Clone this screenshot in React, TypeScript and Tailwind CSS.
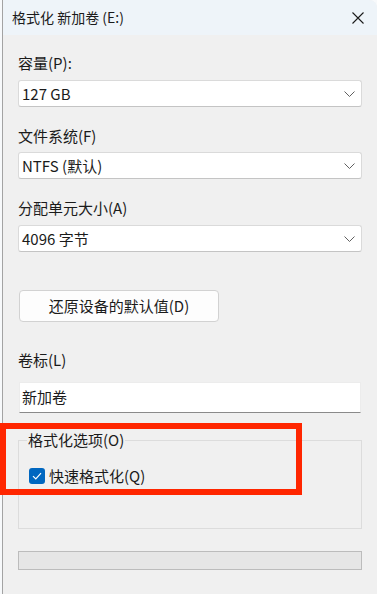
import React from "react";

const font = { fontFamily: '"Noto Sans CJK SC", "Noto Sans", sans-serif' };

function Chevron() {
  return (
    <svg width="11" height="6" viewBox="0 0 11 6" className="text-[#606060]">
      <polyline points="0.5,0.5 5.5,5.5 10.5,0.5" fill="none" stroke="currentColor" strokeWidth="1" />
    </svg>
  );
}

function Combo({ value }: { value: string }) {
  return (
    <div className="flex items-center justify-between h-[27px] w-[344px] bg-white border border-[#dadada] border-b-[#c4c4c4] rounded-[3px] pl-[3px] pr-[6px]">
      <span className="text-[15px] leading-none text-[#1b1b1b]">{value}</span>
      <Chevron />
    </div>
  );
}

function Label({ children, className = "" }: { children: React.ReactNode; className?: string }) {
  return <div className={"text-[15px] leading-[20px] text-[#1b1b1b] " + className}>{children}</div>;
}

export default function App() {
  return (
    <div className="w-[377px] h-[594px] bg-[#f7f9fb] pl-[2px] relative overflow-hidden" style={font}>
      <div className="h-full bg-[#f0f0f0] border-l border-[#a3a3a3] rounded-tr-[8px] overflow-hidden flex flex-col">
        <div className="h-[35px] bg-[#eef4f9] flex items-center justify-between pl-[9px] pr-[13px] shrink-0">
          <span className="text-[14px] text-[#1b1b1b]">格式化 新加卷 (E:)</span>
          <svg width="12" height="12" viewBox="0 0 12 12">
            <path d="M0.5 0.5 L11.5 11.5 M11.5 0.5 L0.5 11.5" stroke="#1b1b1b" strokeWidth="1.1" />
          </svg>
        </div>

        <div className="px-[15px] flex flex-col">
          <Label className="mt-[18px]">容量(P):</Label>
          <div className="mt-[7px]"><Combo value="127 GB" /></div>

          <Label className="mt-[19px]">文件系统(F)</Label>
          <div className="mt-[6px]"><Combo value="NTFS (默认)" /></div>

          <Label className="mt-[19px]">分配单元大小(A)</Label>
          <div className="mt-[7px]"><Combo value="4096 字节" /></div>

          <button className="mt-[38px] ml-[1px] w-[200px] h-[32px] bg-[#fdfdfd] border border-[#d2d2d2] rounded-[4px] text-[15px] text-[#1b1b1b] flex items-center justify-center">
            还原设备的默认值(D)
          </button>

          <Label className="mt-[28px]">卷标(L)</Label>
          <div className="mt-[12px] ml-[1px] h-[31px] w-[342px] bg-white border border-[#ececec] border-b-[#8a8a8a] flex items-center pl-[2px] text-[15px] text-[#1b1b1b]">
            新加卷
          </div>

          <fieldset className="mt-[17px] h-[99px] w-[344px] border border-[#dcdcdc]">
            <legend className="ml-[8px] px-[1px] text-[15px] leading-[20px] text-[#1b1b1b]">格式化选项(O)</legend>
            <div className="mt-[16px] ml-[10px] flex items-center gap-[4px]">
              <span className="w-[16px] h-[16px] rounded-[3px] bg-[#0067c0] flex items-center justify-center">
                <svg width="10" height="8" viewBox="0 0 10 8">
                  <polyline points="1,4.2 3.8,7 9,1.2" fill="none" stroke="white" strokeWidth="1.2" />
                </svg>
              </span>
              <span className="text-[15px] leading-[20px] text-[#1b1b1b]">快速格式化(Q)</span>
            </div>
          </fieldset>

          <div className="mt-[22px] h-[19px] w-[344px] bg-[#e6e6e6] border border-[#bcbcbc]" />
        </div>
      </div>

      <div className="absolute left-0 top-[423px] w-[302px] h-[72px] border-[6px] border-[#ff2600]" />
    </div>
  );
}
